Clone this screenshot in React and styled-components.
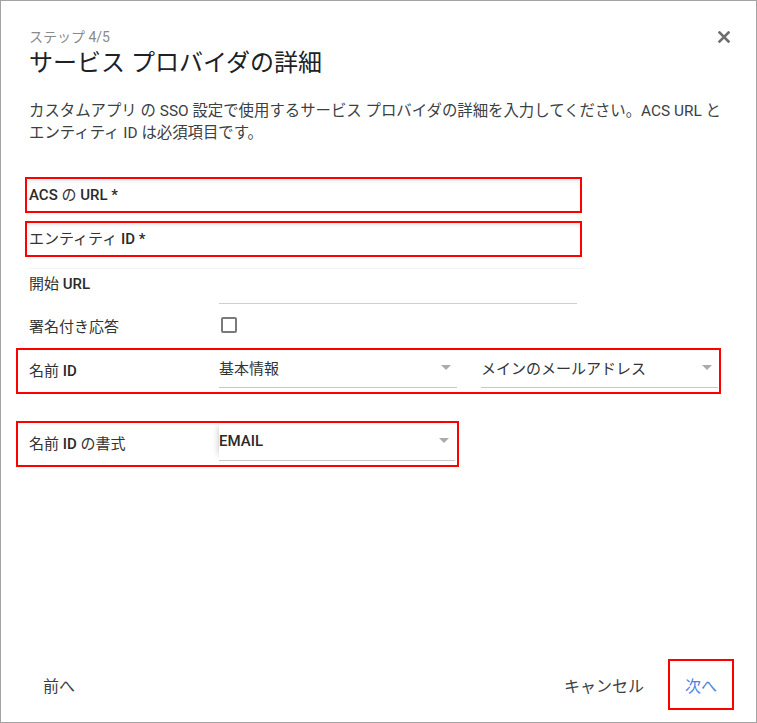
import React from 'react';
import styled, { createGlobalStyle } from 'styled-components';

const GlobalStyle = createGlobalStyle`
  html, body {
    margin: 0;
    padding: 0;
    background: #ffffff;
  }
  body {
    font-family: Roboto, "Noto Sans CJK JP", sans-serif;
    color: #333333;
  }
`;

const Dialog = styled.div`
  box-sizing: border-box;
  width: 757px;
  height: 723px;
  border: 1px solid #a3a3a3;
  background: #ffffff;
  display: flex;
  flex-direction: column;
`;

const Header = styled.div`
  display: flex;
  justify-content: space-between;
  align-items: flex-start;
  padding: 28px 26px 0 28px;
`;

const HeaderText = styled.div`
  display: flex;
  flex-direction: column;
`;

const Step = styled.div`
  font-size: 14px;
  line-height: 17px;
  color: #8a8a8a;
`;

const Title = styled.h1`
  margin: 2px 0 0;
  font-size: 24px;
  line-height: 30px;
  font-weight: 400;
  color: #202124;
`;

const CloseButton = styled.button`
  border: none;
  background: none;
  padding: 0;
  margin-top: 2px;
  width: 12px;
  height: 12px;
  display: flex;
  align-items: center;
  justify-content: center;
  cursor: pointer;
  color: #6e6e6e;
`;

const Description = styled.p`
  margin: 22px 0 0;
  padding: 0 28px;
  font-size: 15.4px;
  line-height: 22px;
  color: #3c4043;
  white-space: nowrap;
`;

const Form = styled.div`
  display: flex;
  flex-direction: column;
  padding-left: 28px;
  margin-top: 33px;
`;

const Highlight = styled.div`
  box-sizing: border-box;
  display: flex;
  align-items: center;
  width: ${p => p.$width}px;
  height: ${p => p.$height}px;
  margin-left: ${p => -p.$inset}px;
  margin-top: ${p => p.$top || 0}px;
  padding-left: ${p => p.$inset - 2}px;
  border: 2px solid #ff0000;
  box-shadow: ${p => (p.$shadow ? 'inset 0 4px 5px -2px rgba(0, 0, 0, 0.09)' : 'none')};
`;

const Label = styled.div`
  flex: 0 0 ${p => p.$width || 190}px;
  font-size: 15px;
  line-height: 20px;
  font-weight: 400;
  color: #333333;
`;

const Strong = styled.span`
  font-weight: 500;
  color: #2a2a2a;
`;

const PlainRow = styled.div`
  display: flex;
  align-items: flex-start;
  height: ${p => p.$height}px;
  padding-top: ${p => p.$padTop}px;
  box-sizing: border-box;
  width: 556px;
  border-top: ${p => (p.$line ? '1px solid #f4f4f4' : 'none')};
  margin-top: ${p => p.$top || 0}px;
`;

const TextInput = styled.div`
  width: 358px;
  height: 29px;
  border-bottom: 1px solid #cfcfcf;
`;

const Checkbox = styled.span`
  box-sizing: border-box;
  display: block;
  width: 16px;
  height: 16px;
  margin-left: 2px;
  border: 2px solid #7a7a7a;
  border-radius: 2px;
`;

const Select = styled.div`
  box-sizing: border-box;
  align-self: flex-start;
  margin-top: 1px;
  margin-right: ${p => p.$gap || 0}px;
  width: ${p => p.$width}px;
  height: 37px;
  display: flex;
  align-items: center;
  justify-content: space-between;
  padding: 0 6px 3px 0;
  border-bottom: 1px solid #c8c8c8;
  font-size: 15px;
  color: #333333;
  box-shadow: ${p => (p.$shade ? '-5px -2px 6px -4px rgba(0, 0, 0, 0.18)' : 'none')};
`;

const Arrow = styled.span`
  width: 0;
  height: 0;
  border-left: 5px solid transparent;
  border-right: 5px solid transparent;
  border-top: 5px solid #ababab;
`;

const Spacer = styled.div`
  flex: 1;
`;

const Footer = styled.div`
  display: flex;
  align-items: center;
  height: 51px;
  margin-bottom: 12px;
  padding: 0 22px 0 42px;
`;

const FooterButton = styled.button`
  border: none;
  background: none;
  padding: 0;
  font-family: Roboto, "Noto Sans CJK JP", sans-serif;
  font-size: 16px;
  color: #3c4043;
  cursor: pointer;
`;

const CancelButton = styled(FooterButton)`
  margin-left: auto;
  margin-right: 24px;
`;

const NextButton = styled(FooterButton)`
  box-sizing: border-box;
  width: 66px;
  height: 51px;
  border: 2px solid #ff0000;
  color: #4d7fe6;
`;

function CloseIcon() {
  return (
    <svg width="12" height="12" viewBox="0 0 12 12" fill="none" stroke="currentColor" strokeWidth="2.6" strokeLinecap="square">
      <path d="M1.5 1.5L10.5 10.5M10.5 1.5L1.5 10.5" />
    </svg>
  );
}

export default function App() {
  return (
    <>
      <GlobalStyle />
      <Dialog>
        <Header>
          <HeaderText>
            <Step>ステップ 4/5</Step>
            <Title>サービス プロバイダの詳細</Title>
          </HeaderText>
          <CloseButton aria-label="閉じる">
            <CloseIcon />
          </CloseButton>
        </Header>

        <Description>
          カスタムアプリ の SSO 設定で使用するサービス プロバイダの詳細を入力してください。ACS URL と
          <br />
          エンティティ ID は必須項目です。
        </Description>

        <Form>
          <Highlight $width={557} $height={36} $inset={4} $shadow>
            <Label><Strong>ACS</Strong> の <Strong>URL *</Strong></Label>
          </Highlight>
          <Highlight $width={557} $height={36} $inset={4} $top={8} $shadow>
            <Label>エンティティ <Strong>ID *</Strong></Label>
          </Highlight>

          <PlainRow $height={37} $padTop={5} $line $top={11}>
            <Label>開始 <Strong>URL</Strong></Label>
            <TextInput />
          </PlainRow>

          <PlainRow $height={43} $padTop={12}>
            <Label>署名付き応答</Label>
            <Checkbox />
          </PlainRow>

          <Highlight $width={705} $height={46} $inset={13}>
            <Label>名前 <Strong>ID</Strong></Label>
            <Select $width={238} $gap={24}>
              基本情報
              <Arrow />
            </Select>
            <Select $width={237}>
              メインのメールアドレス
              <Arrow />
            </Select>
          </Highlight>

          <Highlight $width={443} $height={46} $inset={13} $top={27}>
            <Label>名前 <Strong>ID</Strong> の書式</Label>
            <Select $width={236} $shade>
              <Strong>EMAIL</Strong>
              <Arrow />
            </Select>
          </Highlight>
        </Form>

        <Spacer />

        <Footer>
          <FooterButton>前へ</FooterButton>
          <CancelButton>キャンセル</CancelButton>
          <NextButton>次へ</NextButton>
        </Footer>
      </Dialog>
    </>
  );
}
